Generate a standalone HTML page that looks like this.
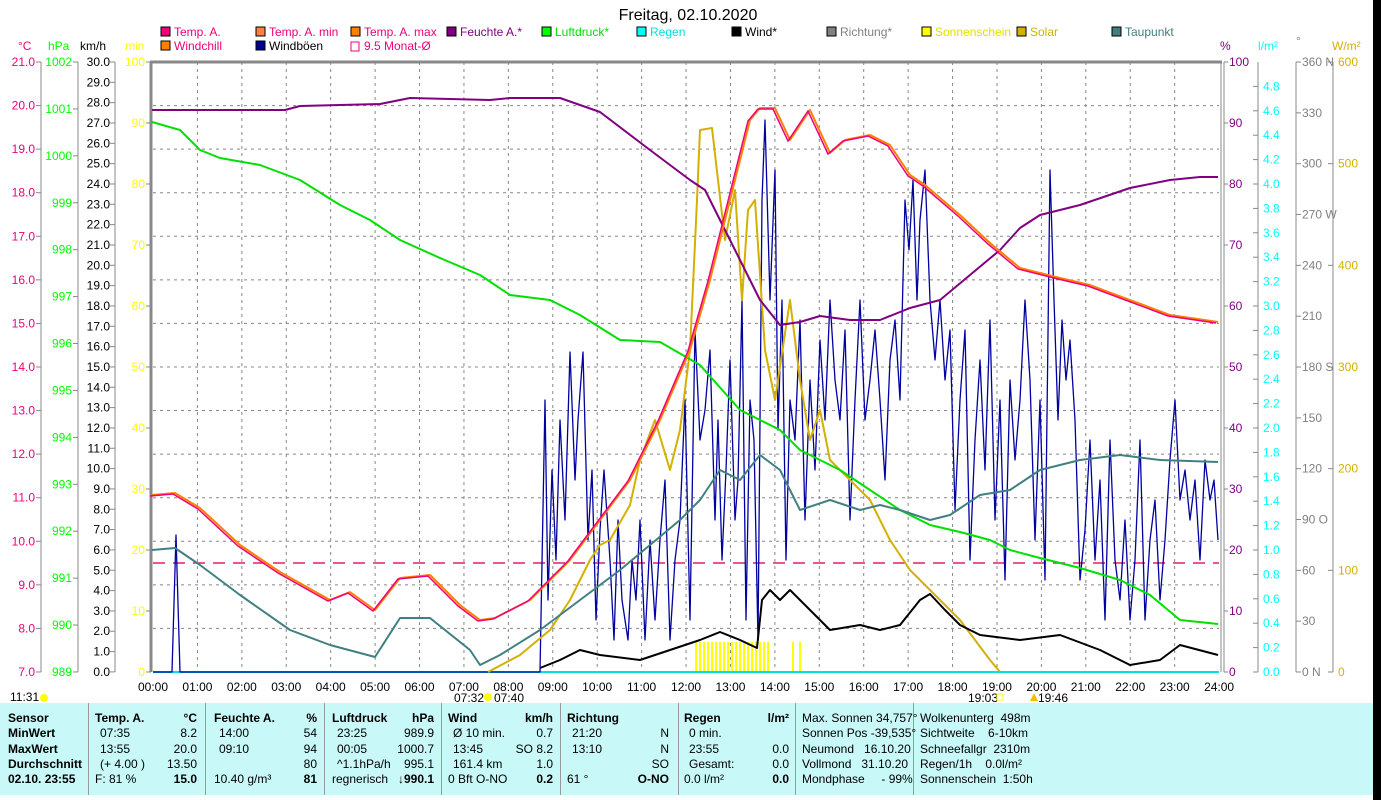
<!DOCTYPE html>
<html><head><meta charset="utf-8"><style>
body{margin:0;width:1381px;height:800px;overflow:hidden;background:#fff;font-family:"Liberation Sans",sans-serif;}
svg{position:absolute;left:0;top:0}
#tb{position:absolute;left:0;top:703px;width:1373px;height:92px;background:#c8f8f8;font-size:12px;}
#tb div{position:absolute;white-space:nowrap}
.b{font-weight:bold}
#blk{position:absolute;left:1373px;top:0;width:8px;height:800px;background:#000}
</style></head><body>
<svg id="s" width="1381" height="800" font-family="Liberation Sans, sans-serif" font-size="12"></svg>
<div id="tb"></div>
<div id="blk"></div>
<script>
var s=document.getElementById('s'),h='';
function X(t){return 153+t*44.42}
function L(x1,y1,x2,y2,c,w,d){h+='<line x1="'+x1+'" y1="'+y1+'" x2="'+x2+'" y2="'+y2+'" stroke="'+c+'" stroke-width="'+(w||1)+'"'+(d?' stroke-dasharray="'+d+'"':'')+'/>'}
function T(x,y,t,c,a,sz,fw){h+='<text x="'+x+'" y="'+y+'" fill="'+c+'" text-anchor="'+(a||'start')+'"'+(sz?' font-size="'+sz+'"':'')+(fw?' font-weight="bold"':'')+'>'+t+'</text>'}
function P(pts,c,w){h+='<polyline fill="none" stroke="'+c+'" stroke-width="'+(w||2)+'" stroke-linejoin="round" points="'+pts+'"/>'}
for(var i=1;i<24;i++)L(X(i),62,X(i),672,'#888',1,'3 4');
for(var i=1;i<14;i++){var y=62+i*43.57;L(153,y,1219,y,'#888',1,'3 4')}
L(151,62,151,672,'#888',3);L(150,62,1222,62,'#888',3);
L(1221,62,1221,672,'#888',1);L(1224,62,1224,672,'#888',1);
T(688,20,'Freitag, 02.10.2020','#000','middle',16);
var lg=[[160,37,'#f0007a','Temp. A.','#f0007a'],[255,37,'#ff8040','Temp. A. min','#f0007a'],[350,37,'#ff8000','Temp. A. max','#f0007a'],[446,37,'#800080','Feuchte A.*','#800080'],[541,37,'#00ff00','Luftdruck*','#00e000'],[636,37,'#00ffff','Regen','#00e0e0'],[731,37,'#000','Wind*','#000'],[826,37,'#808080','Richtung*','#808080'],[921,37,'#ffff00','Sonnenschein','#e0e000'],[1016,37,'#d4b000','Solar','#d4b000'],[1111,37,'#408080','Taupunkt','#408080'],[160,51,'#ff8000','Windchill','#f0007a'],[255,51,'#000090','Windböen','#000']];
lg.forEach(function(a){h+='<rect x="'+(a[0]+1)+'" y="'+(a[1]-10)+'" width="9" height="9" fill="'+a[2]+'" stroke="#000"/>';T(a[0]+14,a[1]-1,a[3],a[4])});
h+='<rect x="351" y="42" width="8" height="9" fill="none" stroke="#f0007a"/>';T(364,50,'9.5 Monat-Ø','#f0007a');
T(18,50,'°C','#f0007a');T(48,50,'hPa','#00ff00');T(80,50,'km/h','#000');T(125,50,'min','#ffff00');
L(41,62,41,672,'#888');L(78,62,78,672,'#888');L(115,62,115,672,'#888');
for(var i=0;i<=14;i++){var y=62+i*43.57;L(36,y,41,y,'#888');T(35,y+4,(21-i).toFixed(1),'#f0007a','end')}
for(var i=0;i<=13;i++){var y=62+i*46.92;L(73,y,78,y,'#888');T(72,y+4,1002-i,'#00ff00','end')}
for(var i=0;i<=30;i++){var y=62+i*20.33;L(110,y,115,y,'#888');T(110,y+4,(30-i).toFixed(1),'#000','end')}
for(var i=0;i<=10;i++){var y=62+i*61;L(146,y,151,y,'#888');T(145,y+4,100-i*10,'#ffff00','end')}
T(1220,50,'%','#800080');T(1258,50,'l/m²','#00ffff');T(1296,45,'°','#808080');T(1332,50,'W/m²','#d4b000');
L(1258,62,1258,672,'#888');L(1296,62,1296,672,'#888');L(1333,62,1333,672,'#888');
for(var i=0;i<=10;i++){var y=62+i*61;L(1224,y,1228,y,'#888');T(1229,y+4,100-i*10,'#800080')}
for(var i=0;i<=24;i++){var y=672-i*24.4;L(1253,y,1258,y,'#888');T(1263,y+4,(i*0.2).toFixed(1),'#00ffff')}
var dl=['N','','','O','','','S','','','W','','','N'];
for(var i=0;i<=12;i++){var y=672-i*50.83;L(1296,y,1301,y,'#888');T(1302,y+4,(i*30)+(dl[i]?' '+dl[i]:''),'#808080')}
for(var i=0;i<=6;i++){var y=672-i*101.67;L(1328,y,1333,y,'#888');T(1338,y+4,i*100,'#d4b000')}
for(var i=0;i<=24;i++)T(X(i),691,(i<10?'0':'')+i+':00','#000','middle');
T(10,701,'11:31','#000');h+='<circle cx="44" cy="698" r="4" fill="#ffff00"/>';
T(454,702,'07:32','#000');T(494,702,'07:40','#000');h+='<circle cx="488" cy="697" r="4" fill="#ffff00"/>';
T(968,702,'19:03','#000');h+='<rect x="997" y="694" width="6" height="6" fill="none" stroke="#ffff00"/>';T(1038,702,'19:46','#000');h+='<path d="M1030 701l4-8 4 8z" fill="#f0c000"/>';
for(var x=696;x<772;x+=4)L(x,642,x,672,'#ffff00',2);L(793,642,793,672,'#ffff00',2);L(800,642,800,672,'#ffff00',2);
L(153,672,1219,672,'#00e0e0',2);
L(153,563,1219,563,'#e0206a',1.5,'12 8');
var g=[[153,672],[172,672],[176,535],[180,672],[196,672],[540,672],[545,400],[548,600],[552,470],[556,560],[560,420],[565,520],[570,352],[575,480],[578,420],[583,352],[588,540],[592,470],[596,620],[600,530],[604,470],[610,560],[614,640],[618,520],[622,600],[628,640],[632,560],[636,600],[640,520],[645,640],[650,540],[655,620],[660,540],[665,480],[670,640],[675,560],[680,520],[685,400],[690,620],[695,330],[700,440],[705,410],[710,350],[715,520],[718,420],[722,560],[726,470],[730,360],[735,520],[738,480],[742,300],[746,620],[750,400],[754,440],[758,640],[762,200],[765,120],[770,300],[775,170],[778,430],[782,300],[786,560],[790,400],[795,440],[800,320],[805,520],[810,380],[815,470],[820,340],[825,420],[830,300],[835,380],[840,420],[845,330],[850,520],[855,400],[860,300],[865,420],[870,380],[875,330],[880,400],[885,480],[890,360],[895,320],[900,400],[905,200],[909,250],[913,180],[917,300],[920,220],[925,170],[930,300],[935,360],[940,300],[945,380],[950,330],[955,510],[960,400],[965,330],[970,560],[975,440],[980,360],[985,470],[990,320],[995,520],[1000,400],[1005,580],[1010,380],[1015,460],[1020,400],[1025,300],[1030,380],[1035,540],[1040,400],[1045,580],[1050,170],[1054,300],[1058,420],[1062,320],[1066,380],[1070,340],[1075,420],[1080,580],[1085,530],[1090,440],[1095,560],[1100,480],[1105,620],[1110,440],[1115,560],[1120,600],[1125,520],[1130,620],[1135,560],[1140,440],[1145,620],[1150,540],[1155,500],[1160,600],[1165,540],[1170,460],[1175,400],[1180,500],[1185,470],[1190,520],[1195,480],[1200,560],[1205,460],[1210,500],[1214,480],[1218,540]];
P(g.join(' '),'#0000a0',1.3);
P('488,672 520,655 550,630 570,600 590,560 600,545 610,540 630,505 640,460 655,420 670,470 680,430 690,350 697,200 700,130 712,128 718,180 725,240 735,190 742,300 748,210 755,200 765,350 775,400 790,300 800,380 810,440 820,410 830,460 850,480 870,500 890,540 910,570 930,590 960,620 990,660 1000,672','#d4b000',2);
P('152,122 180,130 200,150 220,158 260,165 300,180 340,205 370,220 400,240 440,258 480,275 510,295 550,300 580,315 620,340 660,342 700,365 740,410 780,430 800,450 840,470 870,490 900,510 930,525 960,532 990,540 1010,550 1040,558 1080,568 1120,580 1150,595 1180,620 1218,624','#00e000',2);
P('152,110 285,110 300,106 380,104 410,98 490,100 510,98 560,98 600,112 650,150 690,180 705,190 720,220 740,260 760,300 780,325 800,322 820,316 850,320 880,320 910,308 940,300 970,275 1000,250 1020,228 1040,215 1080,205 1130,188 1170,180 1200,177 1218,177','#800080',2);
var tp='152,495 175,493 200,508 240,545 280,572 330,600 350,592 375,610 400,578 430,575 460,605 480,620 495,618 530,600 570,560 600,520 630,480 660,420 690,350 710,280 730,200 750,120 760,108 775,108 790,140 800,125 810,110 830,153 845,140 870,135 890,145 910,175 925,185 960,215 990,243 1020,268 1060,278 1090,285 1130,300 1170,315 1218,322';
P(tp,'#ff8000',2);h+='<polyline fill="none" stroke="#f0007a" stroke-width="1.5" transform="translate(-2,1)" points="'+tp+'"/>';
P('152,550 175,548 200,565 240,595 290,630 330,645 375,657 400,618 430,618 470,650 480,665 500,655 540,630 580,600 620,570 650,545 680,520 700,500 720,470 740,480 760,455 780,470 800,510 830,500 860,510 880,505 900,510 930,520 950,515 980,495 1010,490 1040,470 1080,460 1120,455 1160,460 1218,462','#408080',2);
P('540,668 560,660 580,650 600,655 640,660 670,650 700,640 720,632 740,640 757,648 762,600 770,590 780,600 790,590 810,610 830,630 860,625 880,630 900,625 920,600 930,594 945,610 960,625 980,635 1020,640 1060,635 1100,650 1130,665 1160,660 1180,645 1218,655','#000',2);
s.innerHTML=h;
var tb=document.getElementById('tb'),t='';
function D(x,y,txt,cls,al){t+='<div class="'+(cls||'')+'" style="top:'+y+'px;'+(al?'right:'+(1373-x)+'px':'left:'+x+'px')+'">'+txt+'</div>'}
var rows=[8,23,39,54,69];
['Sensor','MinWert','MaxWert','Durchschnitt','02.10. 23:55'].forEach(function(v,i){D(8,rows[i],v,'b')});
[88,205,324,441,560,678,795,913].forEach(function(x){t+='<div style="left:'+x+'px;top:0;width:1px;height:92px;background:#999"></div>'});
var c=[[95,197,['<b>Temp. A.</b>','07:35','13:55','(+ 4.00 )','F: 81 %'],['<b>°C</b>','8.2','20.0','13.50','<b>15.0</b>']],
[214,317,['<b>Feuchte A.</b>','14:00','09:10','','10.40 g/m³'],['<b>%</b>','54','94','80','<b>81</b>']],
[332,434,['<b>Luftdruck</b>','23:25','00:05','^1.1hPa/h','regnerisch'],['<b>hPa</b>','989.9','1000.7','995.1','<b>↓990.1</b>']],
[448,553,['<b>Wind</b>','Ø 10 min.','13:45','161.4 km','0 Bft O-NO'],['<b>km/h</b>','0.7','SO 8.2','1.0','<b>0.2</b>']],
[567,669,['<b>Richtung</b>','21:20','13:10','','61 °'],['','N','N','SO','<b>O-NO</b>']],
[684,789,['<b>Regen</b>','0 min.','23:55','Gesamt:','0.0 l/m²'],['<b>l/m²</b>','','0.0','0.0','<b>0.0</b>']]];
c.forEach(function(cc){for(var i=0;i<5;i++){D(cc[0]+(i>0&&i<4?5:0),rows[i],cc[2][i]);D(cc[1],rows[i],cc[3][i],'',1)}});
['Max. Sonnen 34,757°','Sonnen Pos -39,535°','Neumond &nbsp;&nbsp;16.10.20','Vollmond &nbsp;&nbsp;31.10.20','Mondphase &nbsp;&nbsp;&nbsp;&nbsp;- 99%'].forEach(function(v,i){D(802,rows[i],v)});
['Wolkenunterg &nbsp;498m','Sichtweite &nbsp;&nbsp;&nbsp;6-10km','Schneefallgr &nbsp;2310m','Regen/1h &nbsp;&nbsp;&nbsp;0.0l/m²','Sonnenschein &nbsp;1:50h'].forEach(function(v,i){D(920,rows[i],v)});
tb.innerHTML=t;
</script>
</body></html>
